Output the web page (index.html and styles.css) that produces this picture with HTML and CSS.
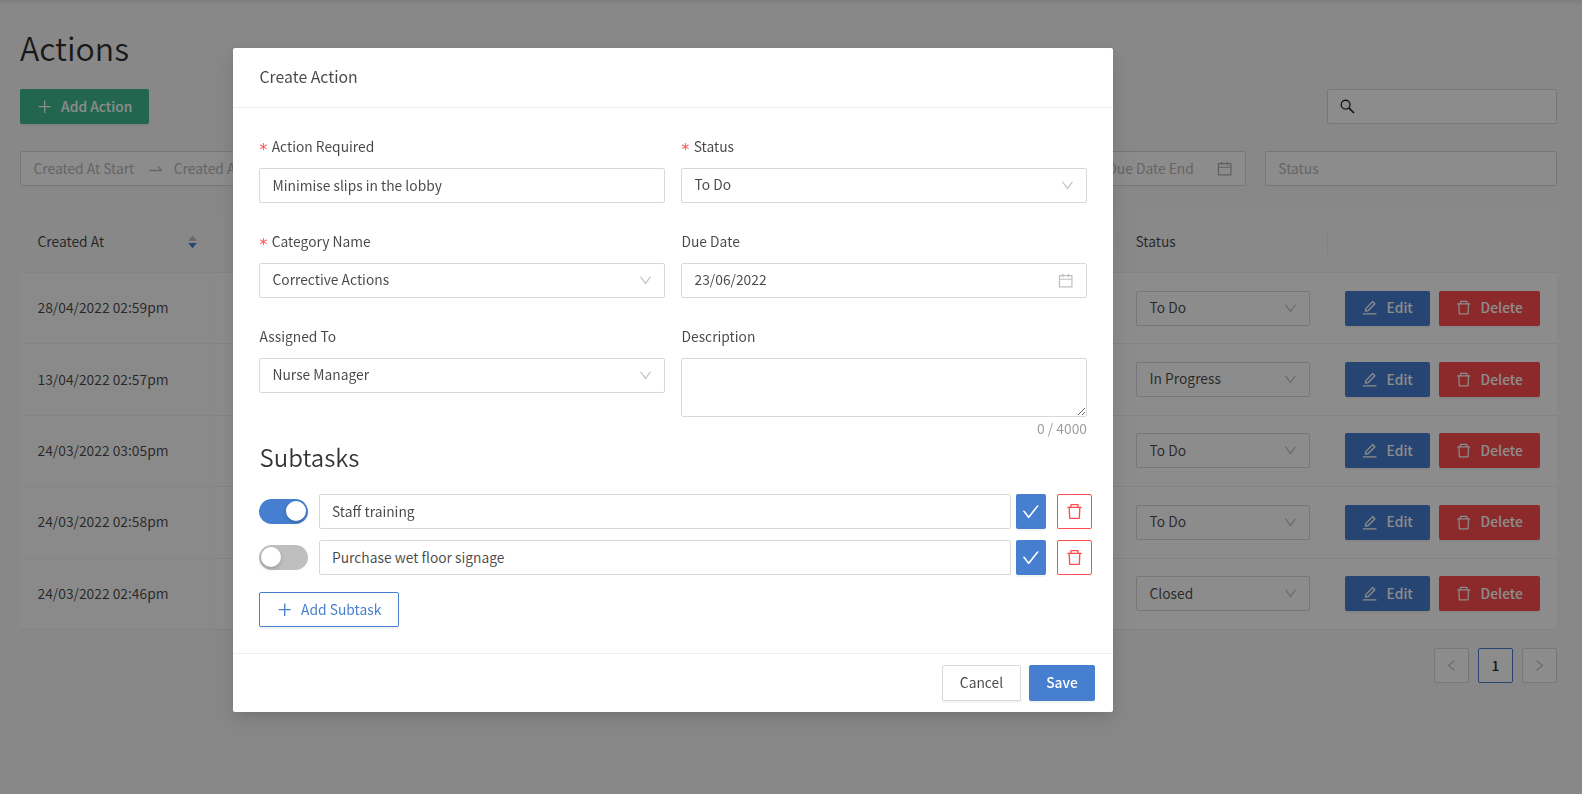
FILE: index.html
```html
<!DOCTYPE html>
<html lang="en">
<head>
<meta charset="utf-8">
<title>Actions</title>
<link rel="stylesheet" href="styles.css">
</head>
<body>
<svg class="sprite" aria-hidden="true">
  <symbol id="plus" viewBox="64 64 896 896"><path d="M482 152h60q8 0 8 8v704q0 8-8 8h-60q-8 0-8-8V160q0-8 8-8z"/><path d="M176 474h672q8 0 8 8v60q0 8-8 8H176q-8 0-8-8v-60q0-8 8-8z"/></symbol>
  <symbol id="down" viewBox="64 64 896 896"><path d="M884 256h-75c-5.1 0-9.9 2.5-12.9 6.6L512 654.2 227.9 262.6c-3-4.1-7.8-6.6-12.9-6.6h-75c-6.5 0-10.3 7.4-6.5 12.7l352.6 486.1c12.8 17.6 39 17.6 51.7 0l352.6-486.1c3.9-5.3.1-12.7-6.4-12.7z"/></symbol>
  <symbol id="calendar" viewBox="64 64 896 896"><path d="M880 184H712v-64c0-4.4-3.6-8-8-8h-56c-4.4 0-8 3.6-8 8v64H384v-64c0-4.4-3.6-8-8-8h-56c-4.4 0-8 3.6-8 8v64H144c-17.7 0-32 14.3-32 32v664c0 17.7 14.3 32 32 32h736c17.7 0 32-14.3 32-32V216c0-17.7-14.3-32-32-32zm-40 656H184V460h656v380zM184 392V256h128v48c0 4.4 3.6 8 8 8h56c4.4 0 8-3.6 8-8v-48h256v48c0 4.4 3.6 8 8 8h56c4.4 0 8-3.6 8-8v-48h128v136H184z"/></symbol>
  <symbol id="trash" viewBox="64 64 896 896"><path d="M360 184h-8c4.4 0 8-3.6 8-8v8h304v-8c0 4.4 3.6 8 8 8h-8v72h72v-80c0-35.3-28.7-64-64-64H352c-35.3 0-64 28.7-64 64v80h72v-72zm504 72H160c-17.7 0-32 14.3-32 32v32c0 4.4 3.6 8 8 8h60.4l24.7 523c1.6 34.1 29.8 61 63.9 61h454c34.2 0 62.3-26.8 63.9-61l24.7-523H888c4.4 0 8-3.6 8-8v-32c0-17.7-14.3-32-32-32zM731.3 840H292.7l-24.2-512h487l-24.2 512z"/></symbol>
  <symbol id="edit" viewBox="64 64 896 896"><path d="M257.7 752c2 0 4-.2 6-.5L431.9 722c2-.4 3.9-1.3 5.3-2.8l423.9-423.9a9.96 9.96 0 000-14.1L694.9 114.9c-1.9-1.9-4.4-2.9-7.1-2.9s-5.2 1-7.1 2.9L256.8 538.8c-1.5 1.5-2.4 3.3-2.8 5.3l-29.5 168.2a33.5 33.5 0 009.4 29.8c6.6 6.4 14.9 9.9 23.8 9.9zm67.4-174.4L687.8 215l73.3 73.3-362.7 362.6-88.9 15.7 15.6-89zM880 836H144c-17.7 0-32 14.3-32 32v36c0 4.4 3.6 8 8 8h784c4.4 0 8-3.6 8-8v-36c0-17.7-14.3-32-32-32z"/></symbol>
  <symbol id="check" viewBox="64 64 896 896"><path d="M912 190h-69.9c-9.8 0-19.1 4.5-25.1 12.2L404.7 724.5 207 474a32 32 0 00-25.1-12.2H112c-6.7 0-10.4 7.7-6.3 12.9l273.9 347c12.8 16.2 37.4 16.2 50.3 0l488.4-618.9c4.1-5.1.4-12.8-6.3-12.8z"/></symbol>
  <symbol id="swap" viewBox="0 0 1024 1024"><path d="M873.1 596.2l-164-208A32 32 0 00684 376h-64.8c-6.7 0-10.4 7.7-6.3 13l144.3 183H152c-4.4 0-8 3.6-8 8v60c0 4.4 3.6 8 8 8h695.9c26.8 0 41.7-30.8 25.2-51.8z"/></symbol>
  <symbol id="left" viewBox="64 64 896 896"><path d="M724 218.3V141c0-6.7-7.7-10.4-12.9-6.3L260.3 486.8a31.86 31.86 0 000 50.3l450.8 352.1c5.3 4.1 12.9.4 12.9-6.3v-77.3c0-4.9-2.3-9.6-6.1-12.6l-360-281 360-281.1c3.8-3 6.1-7.7 6.1-12.6z"/></symbol>
  <symbol id="search" viewBox="0 0 16 16"><circle cx="6" cy="6" r="4.7" fill="none" stroke="currentColor" stroke-width="1.4"/><path d="M9.4 9.4L14.9 14.9" fill="none" stroke="currentColor" stroke-width="1.7"/></symbol>
</svg>

<main class="page">
  <h1 class="page-title">Actions</h1>
  <div class="toolbar">
    <button class="btn btn-green"><svg class="icon"><use href="#plus"/></svg><span>Add Action</span></button>
    <div class="search"><svg class="icon-search"><use href="#search"/></svg></div>
  </div>
  <div class="filters">
    <div class="field range"><span class="range-part">Created At Start</span><svg class="icon-swap"><use href="#swap"/></svg><span class="range-part">Created At End</span><svg class="icon"><use href="#calendar"/></svg></div>
    <div class="field"></div>
    <div class="field"></div>
    <div class="field range"><span class="range-part">Due Date Start</span><svg class="icon-swap"><use href="#swap"/></svg><span class="range-part">Due Date End</span><svg class="icon"><use href="#calendar"/></svg></div>
    <div class="field"><span>Status</span></div>
  </div>

  <div class="table">
    <div class="row head">
      <div class="cell sorted"><span>Created At</span><svg class="sorter" viewBox="0 0 10 14"><path class="sort-up" d="M5 0L9.8 5.6H.2z"/><path class="sort-down" d="M5 14L9.8 8.2H.2z"/></svg></div>
      <div class="cell divided"></div>
      <div class="cell divided"><span>Status</span></div>
      <div class="cell"></div>
    </div>
    <div class="row">
      <div class="cell date"><span>28/04/2022 02:59pm</span></div><div class="cell"></div>
      <div class="cell"><div class="select"><span>To Do</span><svg class="icon-down"><use href="#down"/></svg></div></div>
      <div class="cell buttons"><button class="btn btn-blue"><svg class="icon"><use href="#edit"/></svg><span>Edit</span></button><button class="btn btn-red"><svg class="icon"><use href="#trash"/></svg><span>Delete</span></button></div>
    </div>
    <div class="row">
      <div class="cell date"><span>13/04/2022 02:57pm</span></div><div class="cell"></div>
      <div class="cell"><div class="select"><span>In Progress</span><svg class="icon-down"><use href="#down"/></svg></div></div>
      <div class="cell buttons"><button class="btn btn-blue"><svg class="icon"><use href="#edit"/></svg><span>Edit</span></button><button class="btn btn-red"><svg class="icon"><use href="#trash"/></svg><span>Delete</span></button></div>
    </div>
    <div class="row">
      <div class="cell date"><span>24/03/2022 03:05pm</span></div><div class="cell"></div>
      <div class="cell"><div class="select"><span>To Do</span><svg class="icon-down"><use href="#down"/></svg></div></div>
      <div class="cell buttons"><button class="btn btn-blue"><svg class="icon"><use href="#edit"/></svg><span>Edit</span></button><button class="btn btn-red"><svg class="icon"><use href="#trash"/></svg><span>Delete</span></button></div>
    </div>
    <div class="row">
      <div class="cell date"><span>24/03/2022 02:58pm</span></div><div class="cell"></div>
      <div class="cell"><div class="select"><span>To Do</span><svg class="icon-down"><use href="#down"/></svg></div></div>
      <div class="cell buttons"><button class="btn btn-blue"><svg class="icon"><use href="#edit"/></svg><span>Edit</span></button><button class="btn btn-red"><svg class="icon"><use href="#trash"/></svg><span>Delete</span></button></div>
    </div>
    <div class="row">
      <div class="cell date"><span>24/03/2022 02:46pm</span></div><div class="cell"></div>
      <div class="cell"><div class="select"><span>Closed</span><svg class="icon-down"><use href="#down"/></svg></div></div>
      <div class="cell buttons"><button class="btn btn-blue"><svg class="icon"><use href="#edit"/></svg><span>Edit</span></button><button class="btn btn-red"><svg class="icon"><use href="#trash"/></svg><span>Delete</span></button></div>
    </div>
  </div>

  <nav class="pagination">
    <span class="page-btn"><svg class="icon-page"><use href="#left"/></svg></span>
    <span class="page-btn current">1</span>
    <span class="page-btn"><svg class="icon-page flip"><use href="#left"/></svg></span>
  </nav>
</main>

<div class="mask">
  <section class="modal">
    <header class="modal-head">Create Action</header>
    <div class="modal-body">
      <div class="form">
        <div class="item"><label class="label required">Action Required</label><div class="select input"><span>Minimise slips in the lobby</span></div></div>
        <div class="item"><label class="label required">Status</label><div class="select"><span>To Do</span><svg class="icon-down"><use href="#down"/></svg></div></div>
        <div class="item"><label class="label required">Category Name</label><div class="select"><span>Corrective Actions</span><svg class="icon-down"><use href="#down"/></svg></div></div>
        <div class="item"><label class="label">Due Date</label><div class="select"><span>23/06/2022</span><svg class="icon-cal"><use href="#calendar"/></svg></div></div>
        <div class="item"><label class="label">Assigned To</label><div class="select"><span>Nurse Manager</span><svg class="icon-down"><use href="#down"/></svg></div></div>
        <div class="item"><label class="label">Description</label><textarea class="textarea"></textarea><div class="counter">0 / 4000</div></div>
      </div>
      <h2 class="subtitle">Subtasks</h2>
      <div class="subtask">
        <span class="switch on"><i class="knob"></i></span>
        <div class="select input"><span>Staff training</span></div>
        <button class="btn btn-check"><svg class="icon-check"><use href="#check"/></svg></button>
        <button class="btn btn-trash"><svg class="icon-check"><use href="#trash"/></svg></button>
      </div>
      <div class="subtask">
        <span class="switch"><i class="knob"></i></span>
        <div class="select input"><span>Purchase wet floor signage</span></div>
        <button class="btn btn-check"><svg class="icon-check"><use href="#check"/></svg></button>
        <button class="btn btn-trash"><svg class="icon-check"><use href="#trash"/></svg></button>
      </div>
      <button class="btn btn-outline"><svg class="icon"><use href="#plus"/></svg><span>Add Subtask</span></button>
    </div>
    <footer class="modal-foot"><button class="btn btn-plain"><span>Cancel</span></button><button class="btn btn-blue btn-save"><span>Save</span></button></footer>
  </section>
</div>
</body>
</html>
```
FILE: styles.css
```css
* { box-sizing: border-box; }
body {
  margin: 0;
  height: 794px;
  overflow: hidden;
  background: #f8f8f8;
  color: rgba(0, 0, 0, .72);
  font: 400 13.8px/22px "Noto Sans CJK SC", "Open Sans", sans-serif;
}
.sprite { position: absolute; width: 0; height: 0; }
svg { fill: currentColor; flex: none; }
.page { height: 794px; padding: 24px 25px 0 20px; box-shadow: inset 0 5px 5px -3px rgba(0, 0, 0, .1); }
.page-title { margin: 0; height: 65px; font-size: 32px; line-height: 47px; font-weight: 350; color: rgba(0, 0, 0, .83); }
.toolbar { display: flex; justify-content: space-between; height: 62px; }

.btn {
  display: flex; align-items: center; justify-content: center;
  height: 35px; padding: 0; gap: 9px;
  border: 1px solid transparent; border-radius: 2px;
  box-shadow: 0 2px 0 rgba(0, 0, 0, .045);
  font: inherit; color: #fff;
}
.btn > span, .field > span, .cell > span { padding-bottom: 2px; }
.select > span { padding-bottom: 3px; }
.select.input > span { padding-bottom: 2px; }
.row .select > span { padding-bottom: 2.5px; }
.icon { width: 15.4px; height: 15.4px; }
.btn-green { width: 129px; background: #41bb93; font-weight: 500; }
.btn-blue { width: 85px; background: #467fcf; font-weight: 500; }
.btn-red { width: 101px; background: #ff4d4f; font-weight: 500; }
.search, .field { border: 1px solid #d9d9d9; border-radius: 2px; background: #fff; height: 35px; display: flex; align-items: center; padding: 0 12px; }
.search { width: 230px; color: rgba(0, 0, 0, .85); }
.icon-search { width: 15px; height: 15px; }
.filters { display: grid; grid-template-columns: repeat(5, 1fr); column-gap: 19px; height: 61px; }
.field { color: #b8b8b8; }
.field > span { padding-left: .5px; }
.icon-swap { width: 17.6px; height: 17.6px; margin: 0 9px 0 3px; }
.range-part { flex: 1; white-space: nowrap; }
.field.range .range-part + .icon { color: #b0b0b0; margin-right: 0; }

.table { background: #fff; }
.row { display: grid; grid-template-columns: 196px 902px 210px 229px; height: 71.4px; border-bottom: 1px solid #f0f0f0; align-items: center; }
.head { height: 61px; background: #fafafa; }
.cell { padding: 0 17px 0 17.5px; position: relative; }
.head .cell { height: 60px; display: flex; align-items: center; justify-content: space-between; }
.head .sorted { padding-right: 19px; }
.divided { border-image: linear-gradient(transparent 30%, #ececec 30% 70%, transparent 70%) 1; border-right: 1px solid; }
.sorted { background: #f7f7f7; }
.date { background: #fcfcfc; height: 100%; display: flex; align-items: center; }
.sorter { width: 9px; height: 14px; }
.sort-up { fill: #bfbfbf; }
.sort-down { fill: #467fcf; }
.row .select { width: 174px; margin-left: .5px; }
.buttons { display: flex; gap: 9px; padding-left: 17px; }

.select { display: flex; align-items: center; justify-content: space-between; height: 35px; padding: 0 12px 0 12.5px; border: 1px solid #d9d9d9; border-radius: 2px; background: #fff; }
.icon-down { width: 13px; height: 13px; color: #bfbfbf; }
.icon-cal { width: 15.4px; height: 15.4px; color: #bfbfbf; margin-right: 1px; }

.pagination { display: flex; justify-content: flex-end; gap: 9px; padding-top: 18px; }
.page-btn { width: 35px; height: 35px; display: flex; align-items: center; justify-content: center; border: 1px solid #d9d9d9; border-radius: 2px; background: #fff; color: #bfbfbf; }
.page-btn.current { border-color: #467fcf; color: rgba(0, 0, 0, .85); font-weight: 500; }
.icon-page { width: 13px; height: 13px; }
.flip { transform: scaleX(-1); }

.mask { position: fixed; inset: 0; background: rgba(0, 0, 0, .45); display: flex; justify-content: center; align-items: flex-start; padding: 48px 236px 0 0; }
.modal { width: 880px; height: 664px; background: #fff; border-radius: 2px; box-shadow: 0 3px 6px -4px rgba(0, 0, 0, .12), 0 6px 16px rgba(0, 0, 0, .08), 0 9px 28px 8px rgba(0, 0, 0, .05); }
.modal-head { height: 60px; padding: 17px 26.5px 0; border-bottom: 1px solid #f0f0f0; font-size: 15.8px; line-height: 24px; }
.modal-body { height: 545px; padding: 22px 21px 0 26px; }
.form { display: grid; grid-template-columns: 406px 406px; column-gap: 16px; grid-template-rows: 95px 95px 102px; }
.label { display: flex; align-items: center; height: 35px; margin-bottom: 3px; padding: 0 0 3px .5px; }
.required::before { content: "*"; color: #ff4d4f; font: 15.4px/1 "DejaVu Sans", sans-serif; margin: 9px 4.5px 0 0; }
.textarea { display: block; width: 100%; height: 59px; border: 1px solid #d9d9d9; border-radius: 2px; resize: vertical; outline: 0; }
.counter { text-align: right; color: rgba(0, 0, 0, .4); line-height: 22px; }
.subtitle { margin: 0; height: 72px; padding: 18px 0 0 .5px; font-size: 24px; line-height: 34px; font-weight: 350; color: rgba(0, 0, 0, .8); }
.subtask { display: flex; align-items: center; height: 35px; margin-bottom: 11px; }
.subtask .select { width: 692px; margin: 0 5px 0 11px; padding-left: 12px; }
.switch { width: 49px; height: 25px; border-radius: 13px; background: #bfbfbf; padding: 2px; display: flex; flex: none; }
.switch.on { background: #467fcf; justify-content: flex-end; }
.knob { width: 20px; height: 20px; border-radius: 50%; background: #fff; box-shadow: 0 2px 4px rgba(0, 35, 11, .2); }
.btn-check { width: 30px; background: #467fcf; margin-right: 11px; flex: none; }
.btn-trash { width: 35px; background: #fff; border-color: #ff4d4f; color: #ff4d4f; box-shadow: none; flex: none; }
.icon-check { width: 17.6px; height: 17.6px; }
.btn-trash .icon-check { width: 17px; height: 17px; }
.btn-outline { width: 140px; margin-top: 17px; background: #fff; border-color: #467fcf; color: #467fcf; }
.modal-foot { display: flex; justify-content: flex-end; gap: 8px; padding: 11px 18px; border-top: 1px solid #f0f0f0; }
.btn-plain { width: 79px; height: 36px; background: #fff; border-color: #d9d9d9; color: rgba(0, 0, 0, .72); }
.btn-save { width: 66px; height: 36px; }
```
